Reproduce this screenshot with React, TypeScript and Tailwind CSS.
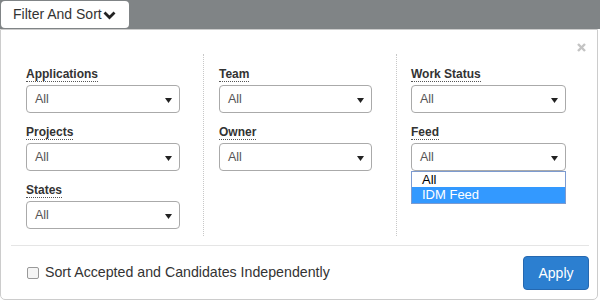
import React from "react";

function Arrow() {
  return (
    <svg width="7" height="5" viewBox="0 0 7 5" className="absolute right-[7px] top-[12px]">
      <polygon points="0,0 7,0 3.5,5" fill="#222" />
    </svg>
  );
}

function Select({ w = "w-[154px]" }: { w?: string }) {
  return (
    <div className={`relative ${w} h-[28px] mt-[3px] border border-[#aaa] rounded-[4px] bg-white`}>
      <span className="absolute left-[8px] top-[6px] text-[12.5px] leading-[14px] text-[#555]">All</span>
      <Arrow />
    </div>
  );
}

function Field({ label, first, w }: { label: string; first?: boolean; w?: string }) {
  return (
    <div className={`flex flex-col items-start ${first ? "" : "mt-[12px]"}`}>
      <span className="block text-[12px] leading-[14px] font-bold text-[#333] border-b border-dotted border-[#555]">
        {label}
      </span>
      <Select w={w} />
    </div>
  );
}

export default function App() {
  return (
    <div className="w-[600px] h-[301px] bg-white" style={{ fontFamily: '"Liberation Sans", Arial, sans-serif' }}>
      <div className="h-[29px] bg-[#808486] pt-[1px] pl-[1px]">
        <div className="w-[128px] h-[27px] bg-white rounded-[4px] flex items-center pl-[12px] text-[14px] text-[#333]">
          <span>Filter And Sort</span>
          <svg width="13" height="9" viewBox="0 0 13 9" className="ml-[1px] mt-[1px]">
            <polyline points="1.5,1.5 6.5,6.5 11.5,1.5" fill="none" stroke="#222" strokeWidth="2.8" />
          </svg>
        </div>
      </div>
      <div className="relative w-[598px] h-[271px] border border-[#ccc] rounded-b-[5px] bg-white px-[10px]">
        <svg width="9" height="9" viewBox="0 0 9 9" className="absolute left-[576px] top-[13px]">
          <line x1="1" y1="1" x2="8" y2="8" stroke="#c4c4c4" strokeWidth="2.4" />
          <line x1="8" y1="1" x2="1" y2="8" stroke="#c4c4c4" strokeWidth="2.4" />
        </svg>
        <div className="flex mt-[24px] h-[182px]">
          <div className="w-[193px] pl-[15px] pt-[13px] border-r border-dotted border-[#c8c8c8]">
            <Field label="Applications" first />
            <Field label="Projects" />
            <Field label="States" />
          </div>
          <div className="w-[193px] pl-[15px] pt-[13px] border-r border-dotted border-[#c8c8c8]">
            <Field label="Team" first w="w-[153px]" />
            <Field label="Owner" w="w-[153px]" />
          </div>
          <div className="w-[190px] pl-[14px] pt-[13px]">
            <Field label="Work Status" first w="w-[155px]" />
            <div className="relative mt-[12px]">
              <Field label="Feed" first w="w-[155px]" />
              <div className="absolute left-0 top-[46px] w-[155px] border border-[#7d9bd0] bg-white text-[13px] leading-[15px]">
                <div className="h-[15px] pl-[10px] text-black">All</div>
                <div className="h-[16px] pl-[10px] bg-[#3399ff] text-white">IDM Feed</div>
              </div>
            </div>
          </div>
        </div>
        <div className="mt-[9px] h-[1px] bg-[#e5e5e5] w-[578px]"></div>
        <div className="flex items-center justify-between mt-[10px] w-[578px]">
          <div className="flex items-center pl-[16px]">
            <div className="w-[12px] h-[12px] border border-[#999] rounded-[2px] bg-[#f5f5f5]"></div>
            <span className="ml-[6px] text-[14.2px] text-[#333]">Sort Accepted and Candidates Independently</span>
          </div>
          <button className="w-[66px] h-[34px] rounded-[4px] bg-[#2c7fd0] border border-[#2568b0] text-white text-[14px]">
            Apply
          </button>
        </div>
      </div>
    </div>
  );
}
